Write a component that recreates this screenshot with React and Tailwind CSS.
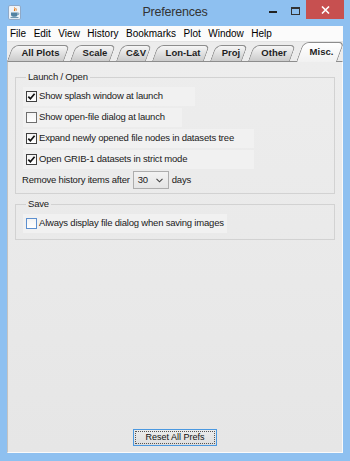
import React from "react";

const menus = ["File", "Edit", "View", "History", "Bookmarks", "Plot", "Window", "Help"];

const tabs = [
  { label: "All Plots", w: "w-[63px]" },
  { label: "Scale", w: "w-[46px]" },
  { label: "C&V", w: "w-[36px]" },
  { label: "Lon-Lat", w: "w-[58px]" },
  { label: "Proj", w: "w-[38px]" },
  { label: "Other", w: "w-[48px]" },
  { label: "Misc.", w: "w-[47px]", active: true },
];

const JavaIcon = () => (
  <svg width="13" height="15" viewBox="0 0 13 15">
    <rect x="0.5" y="0.5" width="12" height="14" rx="1.5" fill="#eef3f9" stroke="#8fa9c8" />
    <path d="M6.5 2.5c1.5 1.2-1.2 2 .2 3.6M8 3.5c.8.8-.6 1.3.2 2.2" stroke="#e76f00" strokeWidth="1" fill="none" />
    <path d="M3 7.5h6.5v2.2c0 1.2-1 2-2.2 2H5.2c-1.2 0-2.2-.8-2.2-2z" fill="#5382a1" />
    <path d="M9.5 8h.8c.8 0 .8 1.6 0 1.6h-.8" stroke="#5382a1" strokeWidth="0.8" fill="none" />
    <path d="M2.5 12.6h8" stroke="#5382a1" strokeWidth="0.9" />
  </svg>
);

const Check = () => (
  <svg width="9" height="9" viewBox="0 0 9 9">
    <path d="M1.3 4.6 L3.4 6.8 L7.6 1.8" stroke="#111" strokeWidth="1.7" fill="none" />
  </svg>
);

const Box = ({ checked, blue }) => (
  <span
    className={`flex h-[11px] w-[11px] items-center justify-center border bg-linear-to-b from-[#f4f4f4] to-[#ffffff] ${
      blue ? "border-[#5c8fcf]" : checked ? "border-[#3f3f3f]" : "border-[#6e6e6e]"
    }`}
  >
    {checked && <Check />}
  </span>
);

const Row = ({ checked, label, w, blue }) => (
  <div className={`flex h-[19px] ${w} items-center gap-[2px] bg-[#f1f1f1] pl-[3px]`}>
    <Box checked={checked} blue={blue} />
    <span className="whitespace-nowrap">{label}</span>
  </div>
);

const Tab = ({ label, w, active }) => (
  <div className={`relative ${w} ${active ? "z-10 -mb-px h-[20px]" : "h-[16px]"}`}>
    <div
      className={`absolute inset-y-0 left-0 right-[6px] origin-bottom-left -skew-x-20 rounded-tl-[6px] rounded-tr-[5px] border border-b-0 border-[#8d8d8d] ${
        active ? "bg-linear-to-b from-[#ffffff] to-[#f1f1f1]" : "bg-linear-to-b from-[#f6f6f6] to-[#cbcbcb]"
      }`}
    />
    <div className="relative flex h-full items-center justify-center pl-[4px] pt-[1px] text-[9.5px] font-bold text-[#1e1e1e]">
      {label}
    </div>
  </div>
);

export default function App() {
  return (
    <div className="flex h-[461px] w-[350px] flex-col overflow-hidden bg-[#8ec0f0] font-['Liberation_Sans',Arial,sans-serif] text-[#1a1a1a]">
      {/* title bar */}
      <div className="grid h-[26px] grid-cols-[1fr_auto_1fr]">
        <div className="flex items-start pl-[8px] pt-[5px]">
          <JavaIcon />
        </div>
        <div className="flex items-center pb-[1px] text-[12.5px] tracking-[-0.2px] text-[#333]">Preferences</div>
        <div className="flex items-start justify-end pr-[6px]">
          <div className="flex h-[19px] w-[22px] items-center justify-center">
            <span className="mt-[4px] h-[2px] w-[8px] bg-[#222]" />
          </div>
          <div className="flex h-[19px] w-[22px] items-start justify-center pt-[7px]">
            <span className="h-[8px] w-[9px] border border-t-2 border-[#333]" />
          </div>
          <div className="flex h-[19px] w-[38px] items-center justify-center bg-[#c75050]">
            <svg width="9" height="8" viewBox="0 0 9 8">
              <path d="M1 0.5 L8 7.5 M8 0.5 L1 7.5" stroke="#fff" strokeWidth="1.6" />
            </svg>
          </div>
        </div>
      </div>

      <div className="mx-[7px] mb-[8px] flex min-h-0 flex-1 flex-col">
        {/* menu bar */}
        <div className="flex h-[16px] items-center gap-[7.5px] border-b border-[#e4e4e4] bg-[#fbfbfb] pl-[3px] text-[10px] text-black">
          {menus.map((m) => (
            <span key={m}>{m}</span>
          ))}
        </div>

        {/* tabs */}
        <div className="flex h-[19px] items-end bg-[#ececec]">
          {tabs.map((t) => (
            <Tab key={t.label} {...t} />
          ))}
        </div>

        {/* content */}
        <div className="flex flex-1 flex-col border border-t-[#8d8d8d] border-l-[#c2c2c2] border-r-[#fafafa] border-b-[#fafafa] bg-linear-to-b from-[#ededed] to-[#e6e6e6] px-[7px] pt-[9px] pb-[6px] text-[9.5px] tracking-[-0.2px]">
          <fieldset className="border border-[#d2d2d2] px-[7px] pt-[4px] pb-[4px]">
            <legend className="ml-[3px] px-[2px] leading-[12px] text-[#222]">Launch / Open</legend>
            <div className="flex flex-col gap-[2px]">
              <Row checked label="Show splash window at launch" w="w-[172px]" />
              <Row label="Show open-file dialog at launch" w="w-[159px]" />
              <Row checked label="Expand newly opened file nodes in datasets tree" w="w-[231px]" />
              <Row checked label="Open GRIB-1 datasets in strict mode" w="w-[231px]" />
              <div className="flex h-[18px] items-center gap-[3px] -ml-px">
                <span className="whitespace-nowrap">Remove history items after</span>
                <div className="flex h-[18px] w-[36px] items-center justify-between border border-[#adadad] bg-linear-to-b from-[#f2f2f2] to-[#e5e5e5] pl-[4px] pr-[5px]">
                  <span>30</span>
                  <svg width="7" height="5" viewBox="0 0 7 5">
                    <path d="M0.5 0.8 L3.5 3.8 L6.5 0.8" stroke="#444" strokeWidth="1.1" fill="none" />
                  </svg>
                </div>
                <span>days</span>
              </div>
            </div>
          </fieldset>

          <fieldset className="mt-[4px] border border-[#d2d2d2] px-[7px] pt-[4px] pb-[6px]">
            <legend className="ml-[3px] px-[2px] leading-[12px] text-[#222]">Save</legend>
            <Row blue label="Always display file dialog when saving images" w="w-[204px]" />
          </fieldset>

          <div className="flex-1" />

          <div className="flex justify-center">
            <button className="flex h-[17px] w-[84px] items-center justify-center border border-[#4a98e0] bg-linear-to-b from-[#ececec] to-[#dedede] p-[1px]">
              <span className="flex h-full w-full items-center justify-center border border-dotted border-[#555] text-[9px] tracking-normal text-[#111]">
                Reset All Prefs
              </span>
            </button>
          </div>
        </div>
      </div>
    </div>
  );
}
